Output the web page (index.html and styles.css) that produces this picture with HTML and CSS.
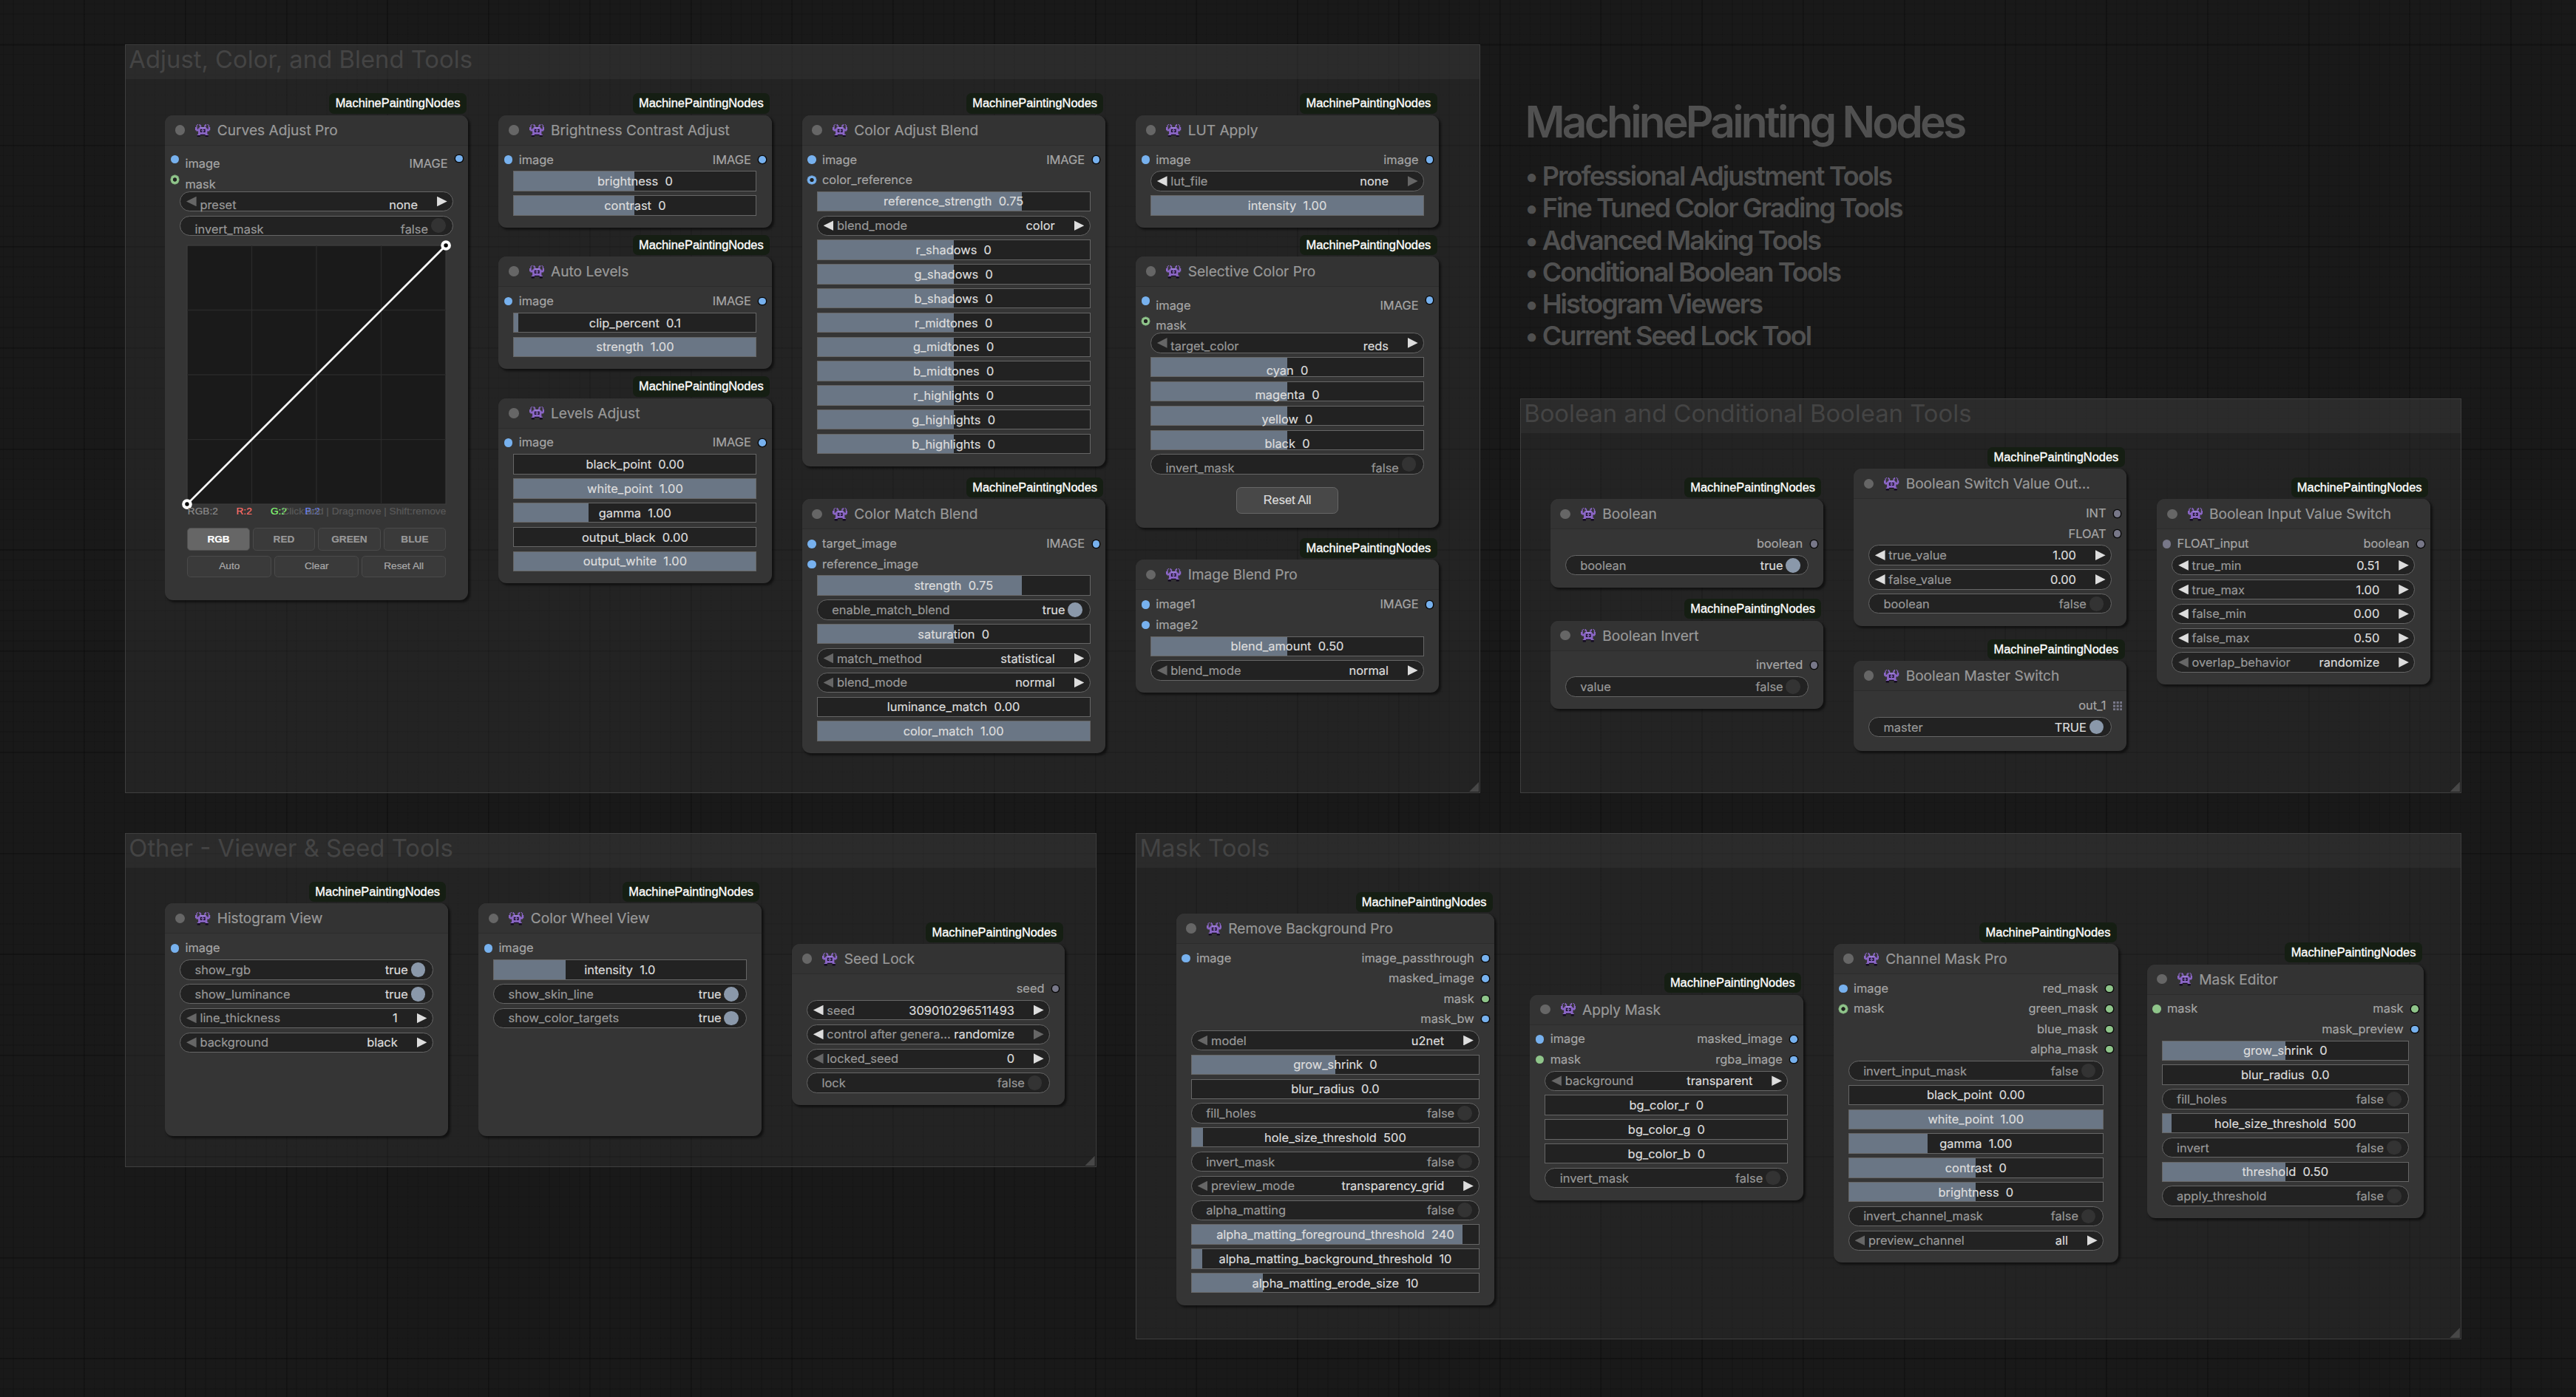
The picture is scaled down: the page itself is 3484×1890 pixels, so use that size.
FILE: index.html
```html
<!DOCTYPE html>
<html lang="en">
<head>
<meta charset="utf-8">
<title>MachinePainting Nodes</title>
<link rel="stylesheet" href="styles.css">
</head>
<body>
<svg class="defs" width="0" height="0" aria-hidden="true">
  <symbol id="alien" viewBox="0 0 15 13">
    <path fill="#150c22" d="M2 11h3v2H2zM10 11h3v2h-3zM3 10h9v1H3z"/>
    <path fill="#8b66c6" d="M2 0h1v1H2zM12 0h1v1h-1zM1 1h1v2H1zM13 1h1v2h-1zM4 0h1v2H4zM10 0h1v2h-1zM5 1h1v2H5zM9 1h1v2H9zM0 3h2v3H0zM13 3h2v3h-2zM4 3h7v1H4zM3 4h9v6H3zM1 5h2v2H1zM12 5h2v2h-2zM2 10h3v1H2zM10 10h3v1h-3z"/>
    <path fill="#1b1029" d="M5 5h2v3H5zM8 5h2v3H8z"/>
    <path fill="#a085d8" d="M5 3h5v1H5zM6 6h1v1H6zM8 6h1v1H8z"/>
  </symbol>
</svg>
<main class="workspace">

  <section class="group group-adjust"><h2>Adjust, Color, and Blend Tools</h2></section>
  <section class="group group-boolean"><h2>Boolean and Conditional Boolean Tools</h2></section>
  <section class="group group-other"><h2>Other - Viewer &amp; Seed Tools</h2></section>
  <section class="group group-mask"><h2>Mask Tools</h2></section>

  <section class="note">
    <h1>MachinePainting Nodes</h1>
    <ul>
      <li>• Professional Adjustment Tools</li>
      <li>• Fine Tuned Color Grading Tools</li>
      <li>• Advanced Making Tools</li>
      <li>• Conditional Boolean Tools</li>
      <li>• Histogram Viewers</li>
      <li>• Current Seed Lock Tool</li>
    </ul>
  </section>

  <article class="node low-text curves-adjust">
    <span class="badge">MachinePaintingNodes</span>
    <header><svg><use href="#alien"/></svg><h3>Curves Adjust Pro</h3></header>
    <div class="slots">
      <ul class="in"><li class="image">image</li><li class="mask optional">mask</li></ul>
      <ul class="out"><li class="image">IMAGE</li></ul>
    </div>
    <div class="widgets">
      <div class="combo first"><span>preset</span><b>none</b></div>
      <div class="toggle"><span>invert_mask</span><b>false</b></div>
    </div>
    <div class="curve-editor">
      <svg class="curve" viewBox="0 0 256 256">
        <rect class="plot" width="256" height="256"/>
        <path class="lines" d="M64 0V256M128 0V256M192 0V256M0 64H256M0 128H256M0 192H256"/>
        <path class="line" d="M0 256L256 0"/>
        <circle class="point" cx="0" cy="256" r="3.5"/>
        <circle class="point" cx="256" cy="0" r="3.5"/>
      </svg>
      <div class="counts">
        <span class="all">RGB:2</span><span class="red">R:2</span><span class="green">G:2</span><span class="blue">B:2</span>
        <span class="hint">Click:add | Drag:move | Shift:remove</span>
      </div>
      <div class="channels"><button class="active">RGB</button><button>RED</button><button>GREEN</button><button>BLUE</button></div>
      <div class="actions"><button>Auto</button><button>Clear</button><button>Reset All</button></div>
    </div>
  </article>

  <article class="node brightness-contrast">
    <span class="badge">MachinePaintingNodes</span>
    <header><svg><use href="#alien"/></svg><h3>Brightness Contrast Adjust</h3></header>
    <div class="slots">
      <ul class="in"><li class="image">image</li></ul>
      <ul class="out"><li class="image">IMAGE</li></ul>
    </div>
    <div class="widgets">
      <div class="slider" style="--fill:50%">brightness  0</div>
      <div class="slider" style="--fill:50%">contrast  0</div>
    </div>
  </article>

  <article class="node auto-levels">
    <span class="badge">MachinePaintingNodes</span>
    <header><svg><use href="#alien"/></svg><h3>Auto Levels</h3></header>
    <div class="slots">
      <ul class="in"><li class="image">image</li></ul>
      <ul class="out"><li class="image">IMAGE</li></ul>
    </div>
    <div class="widgets">
      <div class="slider" style="--fill:2%">clip_percent  0.1</div>
      <div class="slider" style="--fill:100%">strength  1.00</div>
    </div>
  </article>

  <article class="node levels-adjust">
    <span class="badge">MachinePaintingNodes</span>
    <header><svg><use href="#alien"/></svg><h3>Levels Adjust</h3></header>
    <div class="slots">
      <ul class="in"><li class="image">image</li></ul>
      <ul class="out"><li class="image">IMAGE</li></ul>
    </div>
    <div class="widgets">
      <div class="slider" style="--fill:0%">black_point  0.00</div>
      <div class="slider" style="--fill:100%">white_point  1.00</div>
      <div class="slider" style="--fill:31%">gamma  1.00</div>
      <div class="slider" style="--fill:0%">output_black  0.00</div>
      <div class="slider" style="--fill:100%">output_white  1.00</div>
    </div>
  </article>

  <article class="node color-adjust">
    <span class="badge">MachinePaintingNodes</span>
    <header><svg><use href="#alien"/></svg><h3>Color Adjust Blend</h3></header>
    <div class="slots">
      <ul class="in"><li class="image">image</li><li class="image optional">color_reference</li></ul>
      <ul class="out"><li class="image">IMAGE</li></ul>
    </div>
    <div class="widgets">
      <div class="slider" style="--fill:75%">reference_strength  0.75</div>
      <div class="combo"><span>blend_mode</span><b>color</b></div>
      <div class="slider" style="--fill:50%">r_shadows  0</div>
      <div class="slider" style="--fill:50%">g_shadows  0</div>
      <div class="slider" style="--fill:50%">b_shadows  0</div>
      <div class="slider" style="--fill:50%">r_midtones  0</div>
      <div class="slider" style="--fill:50%">g_midtones  0</div>
      <div class="slider" style="--fill:50%">b_midtones  0</div>
      <div class="slider" style="--fill:50%">r_highlights  0</div>
      <div class="slider" style="--fill:50%">g_highlights  0</div>
      <div class="slider" style="--fill:50%">b_highlights  0</div>
    </div>
  </article>

  <article class="node color-match">
    <span class="badge">MachinePaintingNodes</span>
    <header><svg><use href="#alien"/></svg><h3>Color Match Blend</h3></header>
    <div class="slots">
      <ul class="in"><li class="image">target_image</li><li class="image">reference_image</li></ul>
      <ul class="out"><li class="image">IMAGE</li></ul>
    </div>
    <div class="widgets">
      <div class="slider" style="--fill:75%">strength  0.75</div>
      <div class="toggle on"><span>enable_match_blend</span><b>true</b></div>
      <div class="slider" style="--fill:50%">saturation  0</div>
      <div class="combo first"><span>match_method</span><b>statistical</b></div>
      <div class="combo first"><span>blend_mode</span><b>normal</b></div>
      <div class="slider" style="--fill:0%">luminance_match  0.00</div>
      <div class="slider" style="--fill:100%">color_match  1.00</div>
    </div>
  </article>

  <article class="node lut-apply">
    <span class="badge">MachinePaintingNodes</span>
    <header><svg><use href="#alien"/></svg><h3>LUT Apply</h3></header>
    <div class="slots">
      <ul class="in"><li class="image">image</li></ul>
      <ul class="out"><li class="image">image</li></ul>
    </div>
    <div class="widgets">
      <div class="combo last"><span>lut_file</span><b>none</b></div>
      <div class="slider" style="--fill:100%">intensity  1.00</div>
    </div>
  </article>

  <article class="node low-text selective-color">
    <span class="badge">MachinePaintingNodes</span>
    <header><svg><use href="#alien"/></svg><h3>Selective Color Pro</h3></header>
    <div class="slots">
      <ul class="in"><li class="image">image</li><li class="mask optional">mask</li></ul>
      <ul class="out"><li class="image">IMAGE</li></ul>
    </div>
    <div class="widgets">
      <div class="combo first"><span>target_color</span><b>reds</b></div>
      <div class="slider" style="--fill:50%"><span>cyan  0</span></div>
      <div class="slider" style="--fill:50%"><span>magenta  0</span></div>
      <div class="slider" style="--fill:50%"><span>yellow  0</span></div>
      <div class="slider" style="--fill:50%"><span>black  0</span></div>
      <div class="toggle"><span>invert_mask</span><b>false</b></div>
    </div>
    <button class="reset">Reset All</button>
  </article>

  <article class="node image-blend">
    <span class="badge">MachinePaintingNodes</span>
    <header><svg><use href="#alien"/></svg><h3>Image Blend Pro</h3></header>
    <div class="slots">
      <ul class="in"><li class="image">image1</li><li class="image">image2</li></ul>
      <ul class="out"><li class="image">IMAGE</li></ul>
    </div>
    <div class="widgets">
      <div class="slider" style="--fill:50%">blend_amount  0.50</div>
      <div class="combo first"><span>blend_mode</span><b>normal</b></div>
    </div>
  </article>

  <article class="node boolean">
    <span class="badge">MachinePaintingNodes</span>
    <header><svg><use href="#alien"/></svg><h3>Boolean</h3></header>
    <div class="slots">
      <ul class="in"></ul>
      <ul class="out"><li>boolean</li></ul>
    </div>
    <div class="widgets">
      <div class="toggle on"><span>boolean</span><b>true</b></div>
    </div>
  </article>

  <article class="node boolean-invert">
    <span class="badge">MachinePaintingNodes</span>
    <header><svg><use href="#alien"/></svg><h3>Boolean Invert</h3></header>
    <div class="slots">
      <ul class="in"></ul>
      <ul class="out"><li>inverted</li></ul>
    </div>
    <div class="widgets">
      <div class="toggle"><span>value</span><b>false</b></div>
    </div>
  </article>

  <article class="node boolean-switch">
    <span class="badge">MachinePaintingNodes</span>
    <header><svg><use href="#alien"/></svg><h3>Boolean Switch Value Out...</h3></header>
    <div class="slots">
      <ul class="in"></ul>
      <ul class="out"><li>INT</li><li>FLOAT</li></ul>
    </div>
    <div class="widgets">
      <div class="combo"><span>true_value</span><b>1.00</b></div>
      <div class="combo"><span>false_value</span><b>0.00</b></div>
      <div class="toggle"><span>boolean</span><b>false</b></div>
    </div>
  </article>

  <article class="node boolean-master">
    <span class="badge">MachinePaintingNodes</span>
    <header><svg><use href="#alien"/></svg><h3>Boolean Master Switch</h3></header>
    <div class="slots">
      <ul class="in"></ul>
      <ul class="out"><li class="list">out_1<svg viewBox="0 0 8 8"><path d="M0 0h2v2H0zM3 0h2v2H3zM6 0h2v2H6zM0 3h2v2H0zM3 3h2v2H3zM6 3h2v2H6zM0 6h2v2H0zM3 6h2v2H3zM6 6h2v2H6z"/></svg></li></ul>
    </div>
    <div class="widgets">
      <div class="toggle on"><span>master</span><b>TRUE</b></div>
    </div>
  </article>

  <article class="node boolean-input">
    <span class="badge">MachinePaintingNodes</span>
    <header><svg><use href="#alien"/></svg><h3>Boolean Input Value Switch</h3></header>
    <div class="slots">
      <ul class="in"><li>FLOAT_input</li></ul>
      <ul class="out"><li>boolean</li></ul>
    </div>
    <div class="widgets">
      <div class="combo"><span>true_min</span><b>0.51</b></div>
      <div class="combo"><span>true_max</span><b>1.00</b></div>
      <div class="combo"><span>false_min</span><b>0.00</b></div>
      <div class="combo"><span>false_max</span><b>0.50</b></div>
      <div class="combo first"><span>overlap_behavior</span><b>randomize</b></div>
    </div>
  </article>

  <article class="node histogram-view">
    <span class="badge">MachinePaintingNodes</span>
    <header><svg><use href="#alien"/></svg><h3>Histogram View</h3></header>
    <div class="slots">
      <ul class="in"><li class="image">image</li></ul>
    </div>
    <div class="widgets">
      <div class="toggle on"><span>show_rgb</span><b>true</b></div>
      <div class="toggle on"><span>show_luminance</span><b>true</b></div>
      <div class="combo first"><span>line_thickness</span><b>1</b></div>
      <div class="combo first"><span>background</span><b>black</b></div>
    </div>
  </article>

  <article class="node color-wheel">
    <span class="badge">MachinePaintingNodes</span>
    <header><svg><use href="#alien"/></svg><h3>Color Wheel View</h3></header>
    <div class="slots">
      <ul class="in"><li class="image">image</li></ul>
    </div>
    <div class="widgets">
      <div class="slider" style="--fill:28.7%">intensity  1.0</div>
      <div class="toggle on"><span>show_skin_line</span><b>true</b></div>
      <div class="toggle on"><span>show_color_targets</span><b>true</b></div>
    </div>
  </article>

  <article class="node seed-lock">
    <span class="badge">MachinePaintingNodes</span>
    <header><svg><use href="#alien"/></svg><h3>Seed Lock</h3></header>
    <div class="slots">
      <ul class="in"></ul>
      <ul class="out"><li>seed</li></ul>
    </div>
    <div class="widgets">
      <div class="combo"><span>seed</span><b>309010296511493</b></div>
      <div class="combo last"><span>control after genera...</span><b>randomize</b></div>
      <div class="combo first"><span>locked_seed</span><b>0</b></div>
      <div class="toggle"><span>lock</span><b>false</b></div>
    </div>
  </article>

  <article class="node remove-background">
    <span class="badge">MachinePaintingNodes</span>
    <header><svg><use href="#alien"/></svg><h3>Remove Background Pro</h3></header>
    <div class="slots">
      <ul class="in"><li class="image">image</li></ul>
      <ul class="out"><li class="image">image_passthrough</li><li class="image">masked_image</li><li class="mask">mask</li><li class="image">mask_bw</li></ul>
    </div>
    <div class="widgets">
      <div class="combo first"><span>model</span><b>u2net</b></div>
      <div class="slider" style="--fill:50%">grow_shrink  0</div>
      <div class="slider" style="--fill:0%">blur_radius  0.0</div>
      <div class="toggle"><span>fill_holes</span><b>false</b></div>
      <div class="slider" style="--fill:4%">hole_size_threshold  500</div>
      <div class="toggle"><span>invert_mask</span><b>false</b></div>
      <div class="combo first"><span>preview_mode</span><b>transparency_grid</b></div>
      <div class="toggle"><span>alpha_matting</span><b>false</b></div>
      <div class="slider" style="--fill:94.1%">alpha_matting_foreground_threshold  240</div>
      <div class="slider" style="--fill:3.9%">alpha_matting_background_threshold  10</div>
      <div class="slider" style="--fill:25%">alpha_matting_erode_size  10</div>
    </div>
  </article>

  <article class="node apply-mask">
    <span class="badge">MachinePaintingNodes</span>
    <header><svg><use href="#alien"/></svg><h3>Apply Mask</h3></header>
    <div class="slots">
      <ul class="in"><li class="image">image</li><li class="mask">mask</li></ul>
      <ul class="out"><li class="image">masked_image</li><li class="image">rgba_image</li></ul>
    </div>
    <div class="widgets">
      <div class="combo first"><span>background</span><b>transparent</b></div>
      <div class="slider" style="--fill:0%">bg_color_r  0</div>
      <div class="slider" style="--fill:0%">bg_color_g  0</div>
      <div class="slider" style="--fill:0%">bg_color_b  0</div>
      <div class="toggle"><span>invert_mask</span><b>false</b></div>
    </div>
  </article>

  <article class="node channel-mask">
    <span class="badge">MachinePaintingNodes</span>
    <header><svg><use href="#alien"/></svg><h3>Channel Mask Pro</h3></header>
    <div class="slots">
      <ul class="in"><li class="image">image</li><li class="mask optional">mask</li></ul>
      <ul class="out"><li class="mask">red_mask</li><li class="mask">green_mask</li><li class="mask">blue_mask</li><li class="mask">alpha_mask</li></ul>
    </div>
    <div class="widgets">
      <div class="toggle"><span>invert_input_mask</span><b>false</b></div>
      <div class="slider" style="--fill:0%">black_point  0.00</div>
      <div class="slider" style="--fill:100%">white_point  1.00</div>
      <div class="slider" style="--fill:31%">gamma  1.00</div>
      <div class="slider" style="--fill:50%">contrast  0</div>
      <div class="slider" style="--fill:50%">brightness  0</div>
      <div class="toggle"><span>invert_channel_mask</span><b>false</b></div>
      <div class="combo first"><span>preview_channel</span><b>all</b></div>
    </div>
  </article>

  <article class="node mask-editor">
    <span class="badge">MachinePaintingNodes</span>
    <header><svg><use href="#alien"/></svg><h3>Mask Editor</h3></header>
    <div class="slots">
      <ul class="in"><li class="mask">mask</li></ul>
      <ul class="out"><li class="mask">mask</li><li class="image">mask_preview</li></ul>
    </div>
    <div class="widgets">
      <div class="slider" style="--fill:50%">grow_shrink  0</div>
      <div class="slider" style="--fill:0%">blur_radius  0.0</div>
      <div class="toggle"><span>fill_holes</span><b>false</b></div>
      <div class="slider" style="--fill:4%">hole_size_threshold  500</div>
      <div class="toggle"><span>invert</span><b>false</b></div>
      <div class="slider" style="--fill:50%">threshold  0.50</div>
      <div class="toggle"><span>apply_threshold</span><b>false</b></div>
    </div>
  </article>
</main>
</body>
</html>
```
FILE: styles.css
```css
/* 1rem is one cell of the canvas grid (10 graph units). */
html {
  font-size: 13.676px;
}

* {
  box-sizing: border-box;
}

body {
  margin: 0;
  height: 1890px;
  overflow: hidden;
  position: relative;
  color: #a6a6a6;
  font-family: Inter, "Liberation Sans", sans-serif;
  font-size: 1.2rem;
  background:
    repeating-linear-gradient(to right, transparent 0 113px, rgba(0, 0, 0, .18) 113px 115px, transparent 115px 10rem),
    repeating-linear-gradient(to bottom, transparent 0 59.5px, rgba(0, 0, 0, .18) 59.5px 61.5px, transparent 61.5px 10rem),
    repeating-linear-gradient(to right, transparent 0 3.8px, rgba(0, 0, 0, .11) 3.8px 5px, transparent 5px 1rem),
    repeating-linear-gradient(to bottom, transparent 0 4.8px, rgba(0, 0, 0, .11) 4.8px 6px, transparent 6px 1rem),
    #191919;
}

h1, h2, h3, ul {
  margin: 0;
  padding: 0;
  font-weight: 400;
  list-style: none;
}

button {
  margin: 0;
  padding: 0;
  font: inherit;
}

.defs {
  position: absolute;
}

.workspace {
  position: absolute;
  left: 168.4px;
  top: 60px;
}

/* Groups */
.group {
  position: absolute;
  border: 1px solid #3f3f3f;
  background: rgba(68, 68, 68, .25);
}

.group h2 {
  height: 3.36rem;
  padding-left: .33rem;
  background: rgba(68, 68, 68, .25);
  color: #444;
  font-size: 2.4rem;
  line-height: 2.9rem;
  white-space: nowrap;
}

.group::after {
  content: "";
  position: absolute;
  right: 1px;
  bottom: 1px;
  width: 1rem;
  height: 1rem;
  background: #474747;
  clip-path: polygon(100% 0, 100% 100%, 0 100%);
}

.group-adjust { left: .03rem; top: 0; width: 134.07rem; height: 74.1rem; }
.group-boolean { left: 138rem; top: 35rem; width: 93.1rem; height: 39.1rem; }
.group-other { left: .03rem; top: 78rem; width: 96.07rem; height: 33.1rem; }
.group-mask { left: 100rem; top: 78rem; width: 131.1rem; height: 50.1rem; }

/* Heading note */
.note {
  position: absolute;
  left: 1894px;
  top: 70px;
  color: #505050;
  white-space: nowrap;
}

.note h1 {
  font-size: 58.7px;
  font-weight: 600;
  line-height: 70px;
  letter-spacing: -.0645em;
}

.note ul {
  padding-top: 17px;
  font-size: 36px;
  font-weight: 600;
  line-height: 43.3px;
  letter-spacing: -.054em;
}

/* Nodes */
.node {
  position: absolute;
  padding-bottom: 1.2rem;
  border-radius: .8rem;
  background: #353535;
  box-shadow: .15rem .15rem .22rem rgba(0, 0, 0, .5);
  -webkit-text-stroke: .2px currentColor;
}

.badge {
  position: absolute;
  right: .2rem;
  bottom: calc(100% + .15rem);
  padding: 0 .6rem;
  border-radius: .5rem;
  background: #151e13;
  color: #fff;
  font-family: "Liberation Sans", sans-serif;
  line-height: 2rem;
  -webkit-text-stroke: .35px #fff;
}

.node header {
  display: flex;
  align-items: center;
  height: 3rem;
  padding-left: 1rem;
  border-bottom: 1px solid #2c2c2c;
  border-radius: .8rem .8rem 0 0;
  background: #333;
  color: #999;
}

.node header::before {
  content: "";
  width: 1rem;
  height: 1rem;
  border-radius: 50%;
  background: #666;
}

.node header svg {
  width: 1.5rem;
  height: 1.3rem;
  margin: .1rem .65rem 0 1.02rem;
}

.node h3 {
  font-size: 1.4rem;
  white-space: nowrap;
}

.slots {
  display: flex;
  justify-content: space-between;
  padding: .4rem .47rem .14rem .52rem;
  line-height: 2rem;
}

.slots li {
  --type: #777788;
  display: flex;
  align-items: center;
  height: 2rem;
  gap: .58rem;
  padding-top: .05rem;
}

.slots .image { --type: #77b1ee; }
.slots .mask { --type: #8fc58a; }

.slots .out li {
  justify-content: flex-end;
  gap: .66rem;
}

.slots .in li::before,
.slots .out li:not(.list)::after {
  content: "";
  width: .84rem;
  height: .84rem;
  margin: 0 .03rem;
  border-radius: 50%;
  background: var(--type);
}

.slots .out li:not(.list)::after {
  width: .7rem;
  height: .7rem;
  margin: 0 .1rem;
  box-shadow: 0 0 0 .1rem #0a0a0a;
}

.slots .in .optional::before {
  background: radial-gradient(circle, #222 0 .17rem, var(--type) .22rem);
  box-shadow: 0 0 0 .03rem var(--type);
}

.list svg {
  width: .9rem;
  height: .9rem;
  fill: #777788;
}

/* Widgets */
.widgets {
  display: flex;
  flex-direction: column;
  gap: .4rem;
  padding: 0 1.48rem 0 1.46rem;
}

.slider,
.combo,
.toggle {
  display: flex;
  align-items: center;
  height: 2rem;
  border: 1px solid #666;
  background: #222;
  color: #999;
  white-space: pre;
}

.slider {
  justify-content: center;
  background: linear-gradient(to right, #6a7685 var(--fill), #222 var(--fill)) border-box;
  color: #ddd;
}

.combo,
.toggle {
  border-radius: 1rem;
}

.combo span,
.toggle span {
  flex: 1;
}

.combo b,
.toggle b {
  font-weight: 400;
}

.combo b,
.toggle.on b {
  color: #ddd;
}

.combo::before,
.combo::after {
  content: "";
  width: 1rem;
  height: 1rem;
  background: #ddd;
}

.combo::before {
  margin: 0 .35rem 0 .58rem;
  clip-path: polygon(100% 0, 100% 100%, 0 50%);
}

.combo::after {
  margin: 0 .54rem 0 1.9rem;
  clip-path: polygon(0 0, 0 100%, 100% 50%);
}

.combo.first::before,
.combo.last::after {
  background: #666;
}

.toggle {
  padding-left: 1.43rem;
}

.toggle::after {
  content: "";
  width: 1.44rem;
  height: 1.44rem;
  margin: 0 .7rem 0 .28rem;
  border-radius: 50%;
  background: #333;
}

.toggle.on::after {
  background: #8a98aa;
}

/* Nodes whose canvas labels sit on the lower text baseline */
.low-text .slots li {
  padding-top: 0;
  align-items: flex-start;
  line-height: 2.84rem;
}

.low-text .slots li::before,
.low-text .slots li::after {
  position: relative;
  top: .56rem;
}

.low-text .combo span,
.low-text .combo b,
.low-text .toggle span,
.low-text .toggle b,
.low-text .slider span {
  padding-top: .66rem;
}

.reset {
  display: block;
  width: 10.1rem;
  height: 2.68rem;
  margin: 1.24rem auto .2rem;
  border: 1px solid #666;
  border-radius: .5rem;
  background: #484848;
  color: #ddd;
  font: 1.2rem/2.3rem "Liberation Sans", sans-serif;
}

/* Curve editor */
.curve-editor {
  padding: .92rem 2.2rem 0;
  font-family: "Liberation Sans", sans-serif;
  font-size: 1rem;
}

.curve {
  display: block;
  width: 25.6rem;
  height: 25.6rem;
  overflow: visible;
  fill: none;
}

.curve .plot { fill: #1a1a1a; stroke: #3c3c3c; }
.curve .lines { stroke: #2a2a2a; }
.curve .line { stroke: #fff; stroke-width: 2; }
.curve .point { fill: #000; stroke: #fff; stroke-width: 3; }

.counts {
  position: relative;
  display: flex;
  height: 2.36rem;
  padding-left: .05rem;
  line-height: 1.5rem;
}

.counts span { width: 3.4rem; }
.counts .all { width: 4.8rem; color: #8c8c8c; }
.counts .red { color: #ff6f6a; }
.counts .green { color: #88ff77; }
.counts .blue { color: #6f88ff; }

.counts .hint {
  position: absolute;
  right: 0;
  top: 0;
  width: auto;
  color: #5a5a5a;
  white-space: nowrap;
}

.channels,
.actions {
  display: flex;
  gap: .27rem;
}

.channels button,
.actions button {
  flex: 1;
  height: 2.28rem;
  border: 1px solid #4a4a4a;
  border-radius: .35rem;
  background: #3a3a3a;
  color: #999;
  font-weight: 700;
}

.channels .active {
  border-color: #4f4f4f;
  background: #666;
  color: #fff;
}

.actions {
  padding-top: .5rem;
}

.actions button {
  height: 2.1rem;
  padding-bottom: .1rem;
  color: #aaa;
  font-weight: 400;
}

/* Node places on the canvas */
.curves-adjust { left: 4rem; top: 7rem; width: 30rem; height: 48rem; }
.brightness-contrast { left: 37rem; top: 7rem; width: 27rem; }
.auto-levels { left: 37rem; top: 21rem; width: 27rem; }
.levels-adjust { left: 37rem; top: 35rem; width: 27rem; }
.color-adjust { left: 67rem; top: 7rem; width: 30rem; }
.color-match { left: 67rem; top: 45rem; width: 30rem; }
.lut-apply { left: 100rem; top: 7rem; width: 30rem; }
.selective-color { left: 100rem; top: 21rem; width: 30rem; }
.image-blend { left: 100rem; top: 51rem; width: 30rem; }
.boolean { left: 141rem; top: 45rem; width: 27rem; }
.boolean-invert { left: 141rem; top: 57rem; width: 27rem; }
.boolean-switch { left: 171rem; top: 42rem; width: 27rem; }
.boolean-master { left: 171rem; top: 61rem; width: 27rem; padding-bottom: 1.4rem; }
.boolean-input { left: 201rem; top: 45rem; width: 27rem; }
.histogram-view { left: 4rem; top: 85rem; width: 28rem; height: 23rem; }
.color-wheel { left: 35rem; top: 85rem; width: 28rem; height: 23rem; }
.seed-lock { left: 66rem; top: 89rem; width: 27rem; }
.remove-background { left: 104rem; top: 86rem; width: 31.5rem; }
.apply-mask { left: 139rem; top: 94rem; width: 27rem; }
.channel-mask { left: 169rem; top: 89rem; width: 28.2rem; }
.mask-editor { left: 200rem; top: 91rem; width: 27.4rem; }
```
